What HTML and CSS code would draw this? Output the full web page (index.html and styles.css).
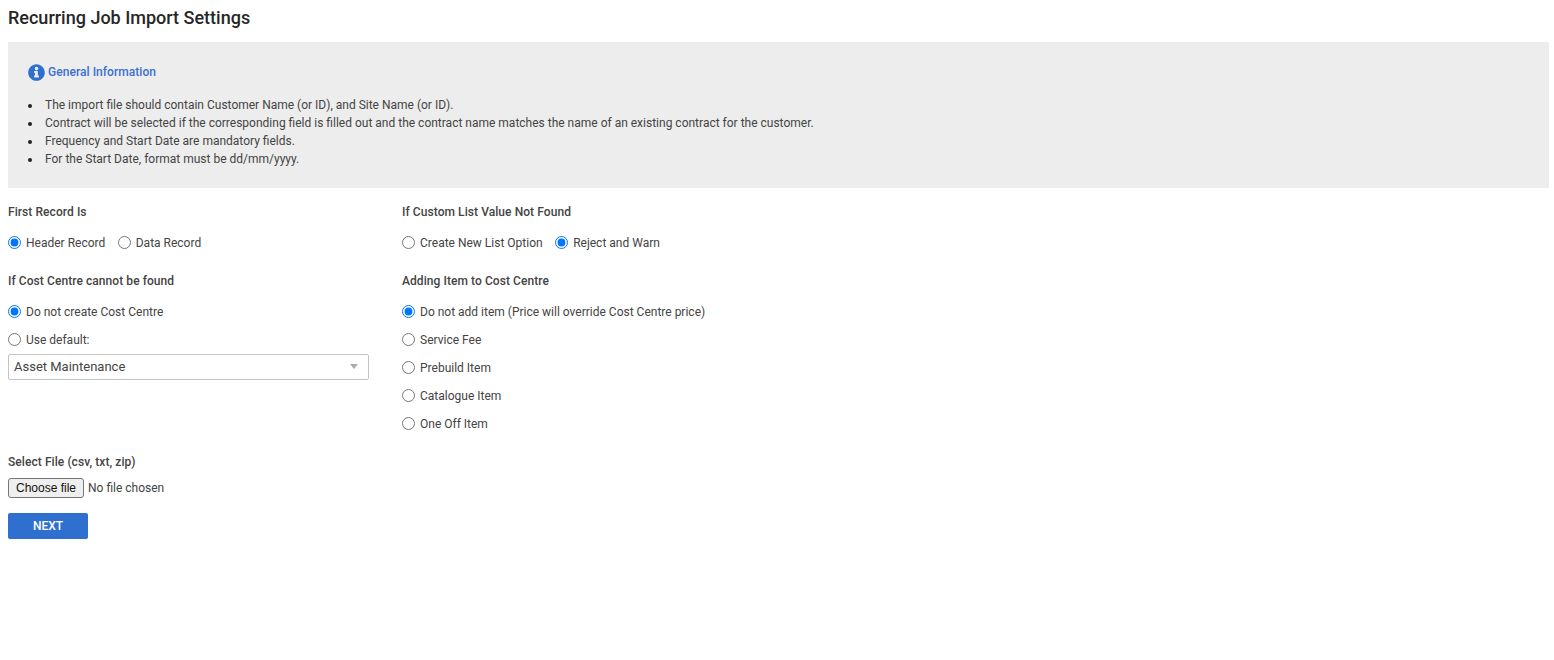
FILE: index.html
```html
<!DOCTYPE html>
<html lang="en">
<head>
<meta charset="utf-8">
<title>Recurring Job Import Settings</title>
<link rel="stylesheet" href="styles.css">
</head>
<body>
<h1 class="page-title">Recurring Job Import Settings</h1>
<section class="info">
  <h2 class="info-head">
    <svg class="info-icon" viewBox="0 0 512 512" aria-hidden="true"><path fill="#2f6fd0" d="M256 6C118 6 6 118 6 256s112 250 250 250 250-112 250-250S394 6 256 6zm0 78a54 54 0 1 1 0 108 54 54 0 0 1 0-108zm76 306c0 8-6 14-14 14H194c-8 0-14-6-14-14v-28c0-8 6-14 14-14h16v-80h-16c-8 0-14-6-14-14v-28c0-8 6-14 14-14h88c8 0 14 6 14 14v122h22c8 0 14 6 14 14v28z"/></svg>
    General Information
  </h2>
  <ul class="info-list">
    <li>The import file should contain Customer Name (or ID), and Site Name (or ID).</li>
    <li>Contract will be selected if the corresponding field is filled out and the contract name matches the name of an existing contract for the customer.</li>
    <li>Frequency and Start Date are mandatory fields.</li>
    <li>For the Start Date, format must be dd/mm/yyyy.</li>
  </ul>
</section>
<form class="form">
  <div class="grid">
    <div class="group">
      <div class="label">First Record Is</div>
      <div class="radio-inline">
        <label class="radio"><input type="radio" name="first" checked>Header Record</label>
        <label class="radio"><input type="radio" name="first">Data Record</label>
      </div>
    </div>
    <div class="group">
      <div class="label">If Custom List Value Not Found</div>
      <div class="radio-inline">
        <label class="radio"><input type="radio" name="custom">Create New List Option</label>
        <label class="radio"><input type="radio" name="custom" checked>Reject and Warn</label>
      </div>
    </div>
    <div class="group">
      <div class="label">If Cost Centre cannot be found</div>
      <div class="radio-stack">
        <label class="radio"><input type="radio" name="cost" checked>Do not create Cost Centre</label>
        <label class="radio"><input type="radio" name="cost">Use default:</label>
      </div>
      <div class="select"><span>Asset Maintenance</span><i class="caret"></i></div>
    </div>
    <div class="group">
      <div class="label">Adding Item to Cost Centre</div>
      <div class="radio-stack">
        <label class="radio"><input type="radio" name="item" checked>Do not add item (Price will override Cost Centre price)</label>
        <label class="radio"><input type="radio" name="item">Service Fee</label>
        <label class="radio"><input type="radio" name="item">Prebuild Item</label>
        <label class="radio"><input type="radio" name="item">Catalogue Item</label>
        <label class="radio"><input type="radio" name="item">One Off Item</label>
      </div>
    </div>
  </div>
  <div class="label file-label">Select File (csv, txt, zip)</div>
  <div class="file">
    <button class="file-button" type="button">Choose file</button>
    <span class="file-name">No file chosen</span>
  </div>
  <button class="next" type="button">NEXT</button>
</form>
</body>
</html>
```
FILE: styles.css
```css
html, body { margin: 0; padding: 0; background: #fff; }
body {
  padding: 0 5px 0 8px;
  font-family: Roboto, "Liberation Sans", sans-serif;
  font-size: 12px;
  color: #444;
}
.page-title {
  margin: 0;
  height: 42px;
  padding-top: 7px;
  box-sizing: border-box;
  font-size: 18px;
  line-height: 22px;
  font-weight: 500;
  color: #262626;
}
.info {
  height: 146px;
  box-sizing: border-box;
  background: #ededed;
  padding: 21px 20px 0;
}
.info-head {
  display: flex;
  align-items: center;
  gap: 3px;
  margin: 0;
  height: 18px;
  font-size: 12px;
  font-weight: 500;
  letter-spacing: 0.05px;
  color: #3a70d2;
}
.info-icon { width: 17px; height: 17px; }
.info-list {
  margin: 15px 0 0;
  padding: 0;
  list-style: none;
  line-height: 18px;
}
.info-list li { display: flex; align-items: center; gap: 13px; }
.info-list li::before {
  content: "";
  width: 4px;
  height: 4px;
  margin-top: 1px;
  border-radius: 50%;
  background: #222;
}
.form { display: block; }
.grid {
  display: grid;
  grid-template-columns: 394px 1fr;
  padding-top: 15px;
}
.group { min-height: 69px; }
.label { font-weight: 500; height: 18px; line-height: 18px; color: #444; letter-spacing: 0.07px; }
.radio-inline { display: flex; gap: 13px; margin-top: 13px; height: 18px; margin-bottom: 20px; }
.radio-inline .radio:first-child + .radio { margin-left: -0.5px; }
.radio-stack { display: flex; flex-direction: column; gap: 10px; margin-top: 13px; }
.radio { display: flex; align-items: center; height: 18px; }
.radio input { margin: 0 5px 2px 0; width: 13px; height: 13px; }
.select {
  width: 361px;
  height: 26px;
  box-sizing: border-box;
  margin-top: 5px;
  border: 1px solid #c4c4c4;
  border-radius: 2px;
  display: flex;
  align-items: center;
  justify-content: space-between;
  padding: 0 10px 2px 5px;
  font-size: 13px;
}
.caret {
  border-left: 4px solid transparent;
  border-right: 4px solid transparent;
  border-top: 5px solid #aaa;
}
.file-label { margin-top: 20px; }
.file {
  display: flex;
  align-items: flex-start;
  gap: 4px;
  margin-top: 7px;
  height: 21px;
  font-size: 12px;
}
.file-name { line-height: 20px; }
.file-button {
  width: 76px;
  height: 20px;
  padding: 0;
  border: 1px solid #767676;
  border-radius: 3px;
  background: #efefef;
  color: #111;
  font-family: "Liberation Sans", Arial, sans-serif;
  font-size: 12px;
}
.next {
  display: block;
  margin-top: 14px;
  width: 80px;
  height: 26px;
  border: 0;
  border-radius: 2px;
  background: #2f6fd0;
  color: #fff;
  font-family: Roboto, "Liberation Sans", sans-serif;
  font-size: 12px;
  font-weight: 500;
  padding: 0;
}
```
